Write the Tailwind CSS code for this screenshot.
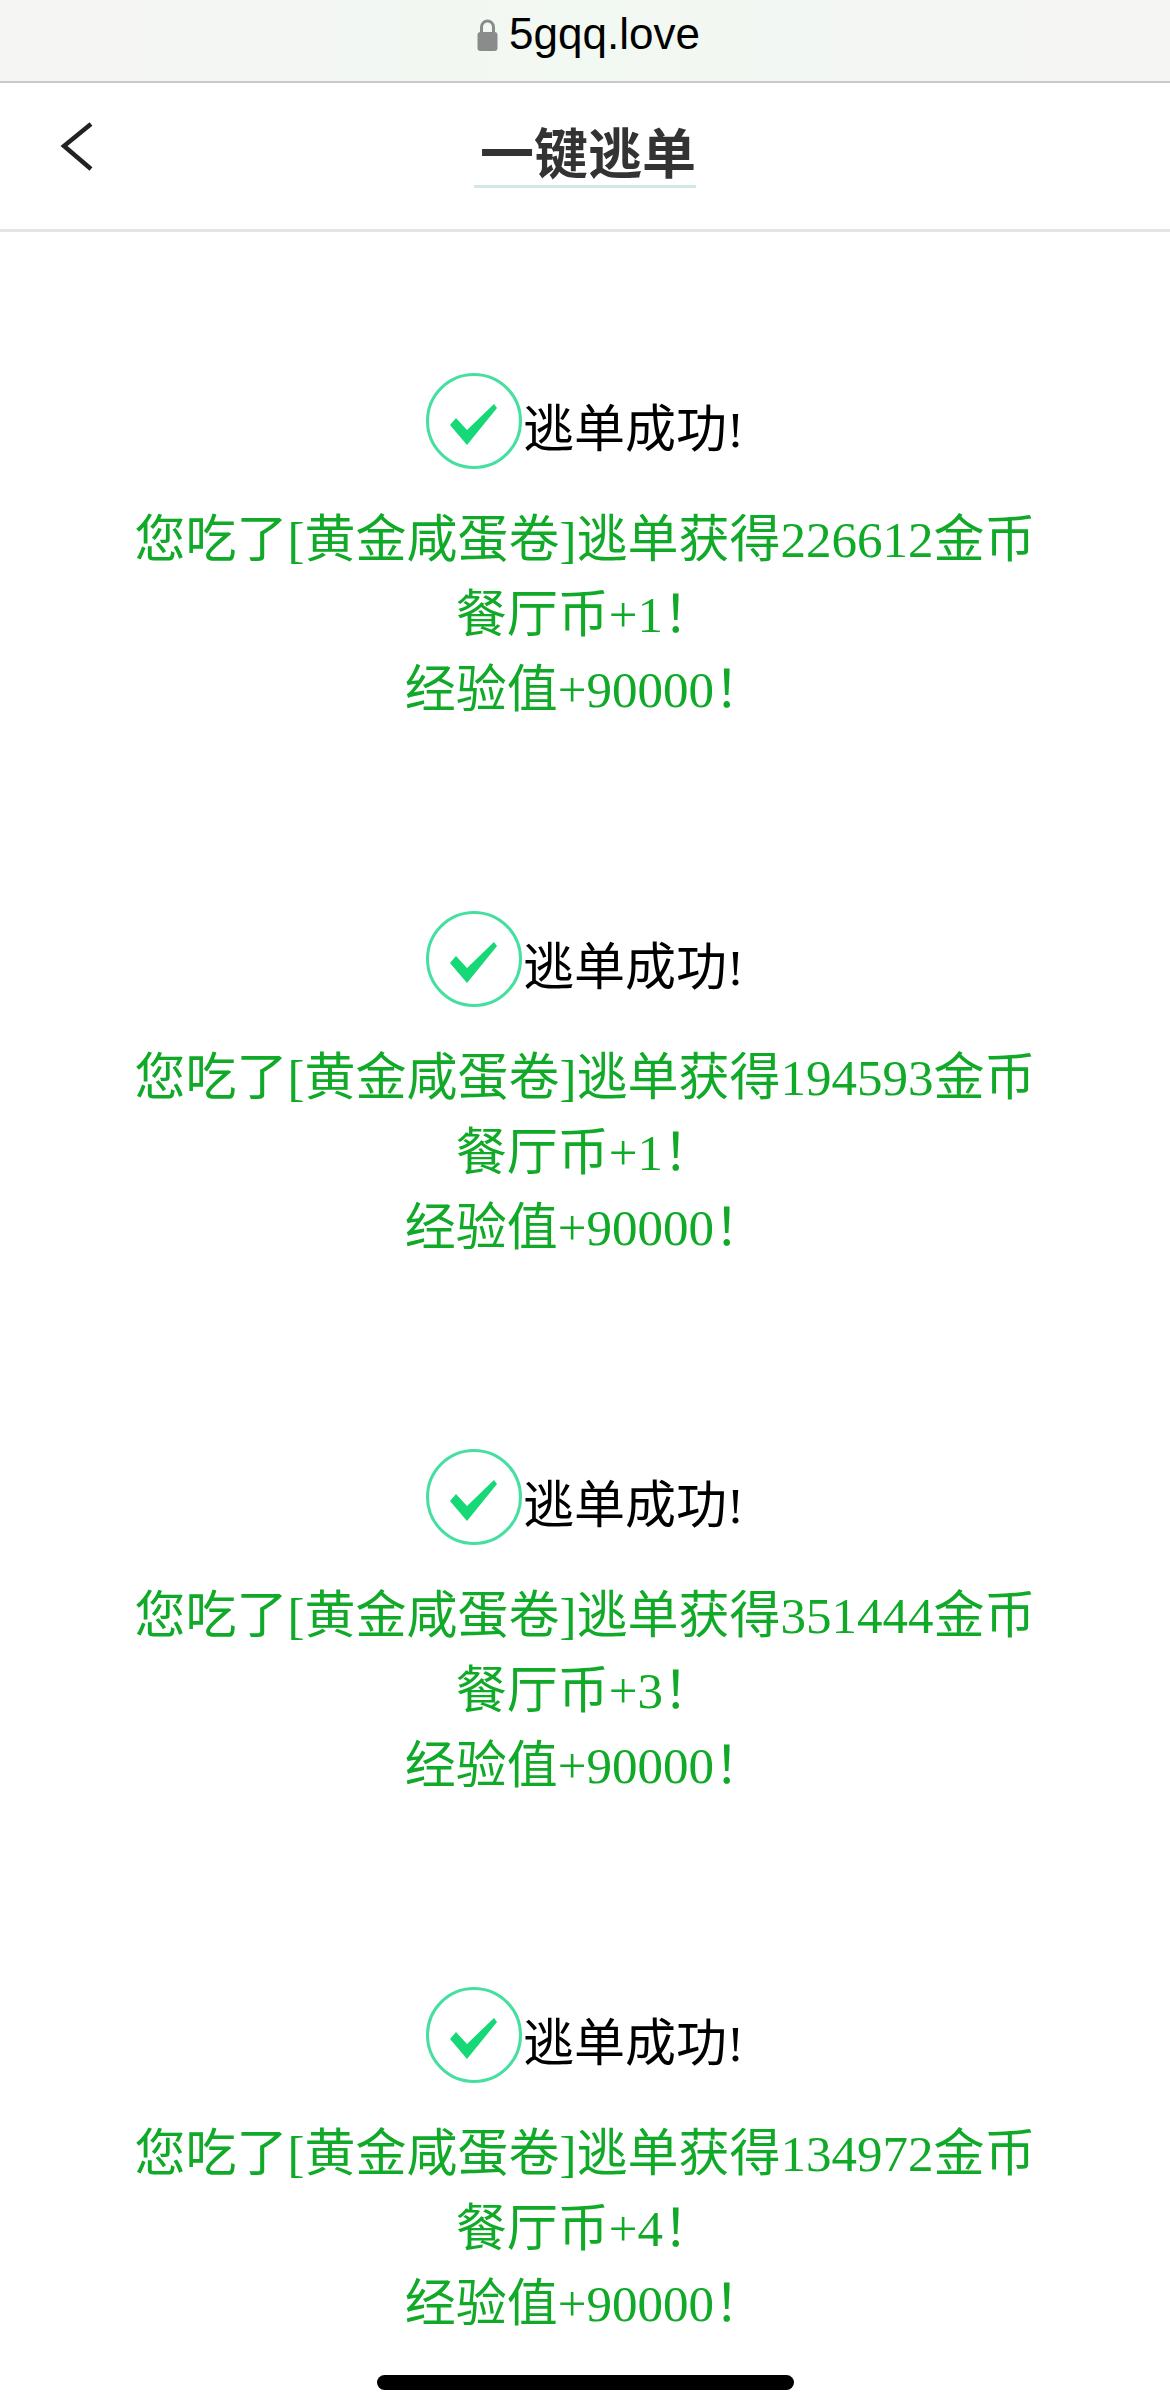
<!DOCTYPE html>
<html lang="zh-CN">
<head>
    <meta charset="UTF-8">
    <meta name="viewport" content="width=device-width, initial-scale=1.0">
    <title>一键逃单</title>
    <script src="https://cdn.jsdelivr.net/npm/@tailwindcss/browser@4"></script>
</head>
<body class="bg-white w-[1170px] h-[2408px] overflow-hidden relative font-['Liberation_Serif','Noto_Sans_CJK_SC',serif]">

    <!-- Address bar -->
    <div class="h-[83px] bg-gradient-to-r from-[#f5f5f4] via-[#f2f8f2] to-[#f5f5f4] border-b-2 border-[#c8c8c8] flex justify-center items-center pb-[14px] pl-[6px] gap-[10px] font-['Liberation_Sans',sans-serif]">
        <svg width="23" height="32" viewBox="0 0 22 32" class="mt-[3px]">
            <path d="M5 15V8a6 6 0 0 1 12 0v7" fill="none" stroke="#8a8c8c" stroke-width="3"/>
            <rect x="1" y="13" width="20" height="19" rx="3" fill="#8a8c8c"/>
        </svg>
        <span class="text-[44px] leading-none text-black">5gqq.love</span>
    </div>

    <!-- Nav -->
    <div class="h-[149px] border-b-[3px] border-[#e5e5e5] relative flex justify-center">
        <svg width="36" height="60" viewBox="0 0 36 60" class="absolute left-[59px] top-[35px]">
            <path d="M32 6 L5 28 L32 51" fill="none" stroke="#222" stroke-width="4.5"/>
        </svg>
        <div class="mt-[33px] h-[72px] w-[222px] pl-[6px] border-b-[3px] border-[#d2e8e6] text-center text-[54px] leading-[70px] font-bold text-[#333] font-['Noto_Sans_CJK_SC',sans-serif] whitespace-nowrap">一键逃单</div>
    </div>

    <!-- Results -->
    <div class="pt-[141px] flex flex-col">
        <div class="h-[538px] flex flex-col items-center">
            <div class="h-[95px] flex items-center">
                <svg width="96" height="96" viewBox="0 0 96 96">
                    <circle cx="48" cy="48" r="46.5" fill="none" stroke="#45dfa0" stroke-width="3"/>
                    <path d="M24 52 L30 45 L41 57 L68 31 L71 35 L41 72 Z" fill="#17d877"/>
                </svg>
                <span class="mt-[20px] text-[51px] leading-none text-black ml-[1px]">逃单成功!</span>
            </div>
            <div class="mt-[35px] text-[51px] leading-[75px] text-center text-[#11a928]">您吃了[黄金咸蛋卷]逃单获得226612金币<br>餐厅币+1！<br>经验值+90000！</div>
        </div>
        <div class="h-[538px] flex flex-col items-center">
            <div class="h-[95px] flex items-center">
                <svg width="96" height="96" viewBox="0 0 96 96">
                    <circle cx="48" cy="48" r="46.5" fill="none" stroke="#45dfa0" stroke-width="3"/>
                    <path d="M24 52 L30 45 L41 57 L68 31 L71 35 L41 72 Z" fill="#17d877"/>
                </svg>
                <span class="mt-[20px] text-[51px] leading-none text-black ml-[1px]">逃单成功!</span>
            </div>
            <div class="mt-[35px] text-[51px] leading-[75px] text-center text-[#11a928]">您吃了[黄金咸蛋卷]逃单获得194593金币<br>餐厅币+1！<br>经验值+90000！</div>
        </div>
        <div class="h-[538px] flex flex-col items-center">
            <div class="h-[95px] flex items-center">
                <svg width="96" height="96" viewBox="0 0 96 96">
                    <circle cx="48" cy="48" r="46.5" fill="none" stroke="#45dfa0" stroke-width="3"/>
                    <path d="M24 52 L30 45 L41 57 L68 31 L71 35 L41 72 Z" fill="#17d877"/>
                </svg>
                <span class="mt-[20px] text-[51px] leading-none text-black ml-[1px]">逃单成功!</span>
            </div>
            <div class="mt-[35px] text-[51px] leading-[75px] text-center text-[#11a928]">您吃了[黄金咸蛋卷]逃单获得351444金币<br>餐厅币+3！<br>经验值+90000！</div>
        </div>
        <div class="h-[538px] flex flex-col items-center">
            <div class="h-[95px] flex items-center">
                <svg width="96" height="96" viewBox="0 0 96 96">
                    <circle cx="48" cy="48" r="46.5" fill="none" stroke="#45dfa0" stroke-width="3"/>
                    <path d="M24 52 L30 45 L41 57 L68 31 L71 35 L41 72 Z" fill="#17d877"/>
                </svg>
                <span class="mt-[20px] text-[51px] leading-none text-black ml-[1px]">逃单成功!</span>
            </div>
            <div class="mt-[35px] text-[51px] leading-[75px] text-center text-[#11a928]">您吃了[黄金咸蛋卷]逃单获得134972金币<br>餐厅币+4！<br>经验值+90000！</div>
        </div>
    </div>

    <!-- Home indicator -->
    <div class="absolute left-[377px] top-[2375px] w-[417px] h-[15px] rounded-full bg-black"></div>

</body>
</html>
